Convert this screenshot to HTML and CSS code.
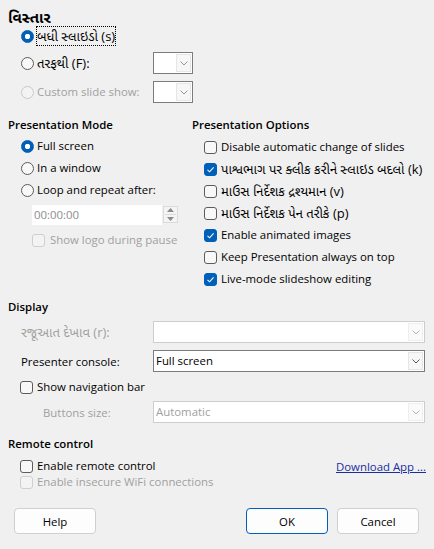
FILE: index.html
```html
<!DOCTYPE html>
<html>
<head>
<meta charset="utf-8">
<link rel="stylesheet" href="styles.css">
</head>
<body>
<div class="dlg">
  <section class="range">
    <h2 class="hd gu">વિસ્તાર</h2>
    <div class="opt r1"><span class="radio on"></span><span class="lbl gu"><span class="focus">બધી સ્લાઇડો (s)</span></span></div>
    <div class="opt r2"><span class="radio"></span><span class="lbl wide gu">તરફથી (F):</span>
      <div class="combo small"><span class="val"></span><span class="dd"><svg width="8" height="5" viewBox="0 0 8 5"><polyline points="0.5,0.5 4,4 7.5,0.5" fill="none" stroke="#9a9a9a" stroke-width="1"/></svg></span></div>
    </div>
    <div class="opt r3 dis"><span class="radio dis"></span><span class="lbl wide">Custom slide show:</span>
      <div class="combo small"><span class="val"></span><span class="dd"><svg width="8" height="5" viewBox="0 0 8 5"><polyline points="0.5,0.5 4,4 7.5,0.5" fill="none" stroke="#9a9a9a" stroke-width="1"/></svg></span></div>
    </div>
  </section>

  <div class="cols">
    <section class="col mode">
      <h2 class="hd">Presentation Mode</h2>
      <div class="list">
        <div class="opt"><span class="radio on"></span><span class="lbl">Full screen</span></div>
        <div class="opt"><span class="radio"></span><span class="lbl">In a window</span></div>
        <div class="opt"><span class="radio"></span><span class="lbl">Loop and repeat after:</span></div>
      </div>
      <div class="spin">
        <span class="field">00:00:00</span>
        <span class="arrows">
          <svg width="7" height="4" viewBox="0 0 7 4"><polygon points="0,4 3.5,0 7,4" fill="#8a8a8a"/></svg>
          <span class="sep"></span>
          <svg width="7" height="4" viewBox="0 0 7 4"><polygon points="0,0 7,0 3.5,4" fill="#8a8a8a"/></svg>
        </span>
      </div>
      <div class="opt logo dis"><span class="check dis"></span><span class="lbl">Show logo during pause</span></div>
    </section>

    <section class="col options">
      <h2 class="hd">Presentation Options</h2>
      <div class="list">
        <div class="opt"><span class="check"></span><span class="lbl">Disable automatic change of slides</span></div>
        <div class="opt"><span class="check on"><svg width="11" height="11" viewBox="0 0 11 11"><polyline points="2.5,5.8 4.6,7.8 8.6,3.4" fill="none" stroke="#fff" stroke-width="1.1"/></svg></span><span class="lbl gu">પાશ્વભાગ પર ક્લીક કરીને સ્લાઇડ બદલો (k)</span></div>
        <div class="opt"><span class="check"></span><span class="lbl gu">માઉસ નિર્દેશક દ્રશ્યમાન (v)</span></div>
        <div class="opt"><span class="check"></span><span class="lbl gu">માઉસ નિર્દેશક પેન તરીકે (p)</span></div>
        <div class="opt"><span class="check on"><svg width="11" height="11" viewBox="0 0 11 11"><polyline points="2.5,5.8 4.6,7.8 8.6,3.4" fill="none" stroke="#fff" stroke-width="1.1"/></svg></span><span class="lbl">Enable animated images</span></div>
        <div class="opt"><span class="check"></span><span class="lbl">Keep Presentation always on top</span></div>
        <div class="opt"><span class="check on"><svg width="11" height="11" viewBox="0 0 11 11"><polyline points="2.5,5.8 4.6,7.8 8.6,3.4" fill="none" stroke="#fff" stroke-width="1.1"/></svg></span><span class="lbl">Live-mode slideshow editing</span></div>
      </div>
    </section>
  </div>

  <section class="display">
    <h2 class="hd">Display</h2>
    <div class="frow d1 dis">
      <span class="flabel gu">રજૂઆત દેખાવ (r):</span>
      <div class="combo big dis"><span class="val"></span><span class="dd"><svg width="8" height="5" viewBox="0 0 8 5"><polyline points="0.5,0.5 4,4 7.5,0.5" fill="none" stroke="#b5b5b5" stroke-width="1"/></svg></span></div>
    </div>
    <div class="frow d2">
      <span class="flabel">Presenter console:</span>
      <div class="combo big"><span class="val">Full screen</span><span class="dd"><svg width="8" height="5" viewBox="0 0 8 5"><polyline points="0.5,0.5 4,4 7.5,0.5" fill="none" stroke="#555" stroke-width="1"/></svg></span></div>
    </div>
    <div class="opt nav"><span class="check"></span><span class="lbl">Show navigation bar</span></div>
    <div class="frow d4 dis">
      <span class="flabel sub">Buttons size:</span>
      <div class="combo big dis"><span class="val">Automatic</span><span class="dd"><svg width="8" height="5" viewBox="0 0 8 5"><polyline points="0.5,0.5 4,4 7.5,0.5" fill="none" stroke="#b5b5b5" stroke-width="1"/></svg></span></div>
    </div>
  </section>

  <section class="remote">
    <h2 class="hd">Remote control</h2>
    <div class="opt rrow"><span class="check"></span><span class="lbl grow">Enable remote control</span><a class="link" href="#">Download App ...</a></div>
    <div class="opt rrow dis"><span class="check dis"></span><span class="lbl">Enable insecure WiFi connections</span></div>
  </section>

  <div class="btn-row">
    <button class="pb">Help</button>
    <span class="grow"></span>
    <button class="pb default">OK</button>
    <button class="pb">Cancel</button>
  </div>
</div>
</body>
</html>
```

FILE: styles.css
```css
html, body {
  margin: 0;
  background: #f0f0f0;
}
body {
  width: 434px;
  height: 549px;
  overflow: hidden;
  font-family: "Segoe UI", "Open Sans", "Noto Sans Gujarati", "Lohit Gujarati", "Noto Sans", sans-serif;
  font-size: 11.4px;
  color: #000;
}
.dlg {
  padding: 0 9px 0 8px;
}
.hd {
  margin: 0;
  font-size: 11.4px;
  font-weight: 600;
  line-height: 16px;
  height: 16px;
  white-space: nowrap;
}
.gu {
  font-size: 13px;
}
.hd.gu {
  font-size: 15px;
  font-weight: 700;
}
.opt {
  display: flex;
  align-items: center;
  height: 22px;
  margin-left: 13px;
  white-space: nowrap;
}
.lbl {
  line-height: 16px;
}
.wide {
  width: 116px;
  flex: none;
}
.grow {
  flex: 1;
}
.dis .lbl, .dis .flabel, .lbl.dis {
  color: #a0a0a0;
}
.radio {
  width: 13px;
  height: 13px;
  box-sizing: border-box;
  border: 1px solid #5c5c5c;
  border-radius: 50%;
  background: #f8f8f8;
  flex: none;
  margin-right: 3px;
}
.radio.on {
  border-color: #005fb8;
  background: radial-gradient(circle, #fff 0 2.4px, #005fb8 3px);
}
.radio.dis {
  border-color: #c8c8c8;
  background: #f3f3f3;
}
.check {
  width: 13px;
  height: 13px;
  box-sizing: border-box;
  border: 1px solid #5c5c5c;
  border-radius: 3px;
  background: #f8f8f8;
  flex: none;
  margin-right: 4px;
  display: flex;
  align-items: center;
  justify-content: center;
}
.check.on {
  background: #005fb8;
  border-color: #005fb8;
}
.check.dis {
  border-color: #cfcfcf;
  background: #f3f3f3;
}
.focus {
  outline: 1px dotted #000;
}

/* range */
.range {
  padding-top: 9px;
}
.r1 {
  margin-top: 2px;
  height: 18px;
}
.r2 {
  margin-top: 7px;
}
.r3 {
  margin-top: 7px;
}

/* combo */
.combo {
  display: flex;
  height: 22px;
  box-sizing: border-box;
  border: 1px solid #7b7c82;
  background: #fff;
  flex: none;
}
.combo .val {
  flex: 1;
  padding-left: 2px;
  line-height: 20px;
}
.combo .dd {
  width: 15px;
  margin: 1px;
  box-sizing: border-box;
  border: 1px solid #e6e6e6;
  background: #f7f7f7;
  display: flex;
  align-items: center;
  justify-content: center;
}
.combo.small {
  width: 40px;
}
.combo.big {
  width: 272px;
}
.combo.dis {
  border-color: #cdcdcd;
}
.combo.dis .val {
  color: #a0a0a0;
}
.combo.dis .dd {
  background: #fafafa;
  border-color: #eeeeee;
}

/* columns */
.cols {
  display: flex;
  margin-top: 14px;
}
.col.mode {
  width: 184px;
  flex: none;
}
.col.options {
  flex: 1;
}
.mode .list {
  margin-top: 2px;
}
.options .list {
  margin-top: 3px;
}
.options .opt {
  margin-left: 12px;
}
.spin {
  display: flex;
  margin: 4px 0 0 24px;
  height: 20px;
}
.spin .field {
  width: 128px;
  background: #fff;
  color: #8c8c8c;
  padding-left: 2px;
  line-height: 20px;
}
.spin .arrows {
  width: 15px;
  height: 17px;
  margin: 1px 0 0 1px;
  box-sizing: border-box;
  border: 1px solid #dadada;
  background: #f4f4f4;
  display: flex;
  flex-direction: column;
  align-items: center;
  justify-content: space-around;
}
.spin .sep {
  width: 11px;
  height: 1px;
  background: #dadada;
}
.opt.logo {
  margin: 4px 0 0 24px;
}
.opt.logo .check {
  margin-right: 5px;
}

/* display */
.display {
  margin-top: 9px;
}
.frow {
  display: flex;
  align-items: center;
  height: 22px;
  white-space: nowrap;
}
.flabel {
  width: 145px;
  padding-left: 13px;
  box-sizing: border-box;
  flex: none;
}
.flabel.sub {
  padding-left: 35px;
}
.d1 {
  margin-top: 6px;
}
.d2 {
  margin-top: 7px;
}
.opt.nav {
  margin: 4px 0 0 12px;
}
.d4 {
  margin-top: 3px;
}

/* remote */
.remote {
  margin-top: 13px;
}
.rrow {
  height: 16px;
  margin-left: 12px;
}
.remote .rrow:first-of-type {
  margin-top: 6px;
}
.link {
  color: #1a2ea0;
  text-decoration: underline;
  margin-right: -1px;
}

/* buttons */
.btn-row {
  display: flex;
  margin: 18px 6px 0 6px;
  gap: 9px;
}
.pb {
  width: 82px;
  height: 26px;
  box-sizing: border-box;
  border: 1px solid #d0d0d0;
  border-radius: 4px;
  background: #fdfdfd;
  font: inherit;
  color: #000;
  padding: 0;
}
.pb.default {
  border-color: #005fb8;
}
```
